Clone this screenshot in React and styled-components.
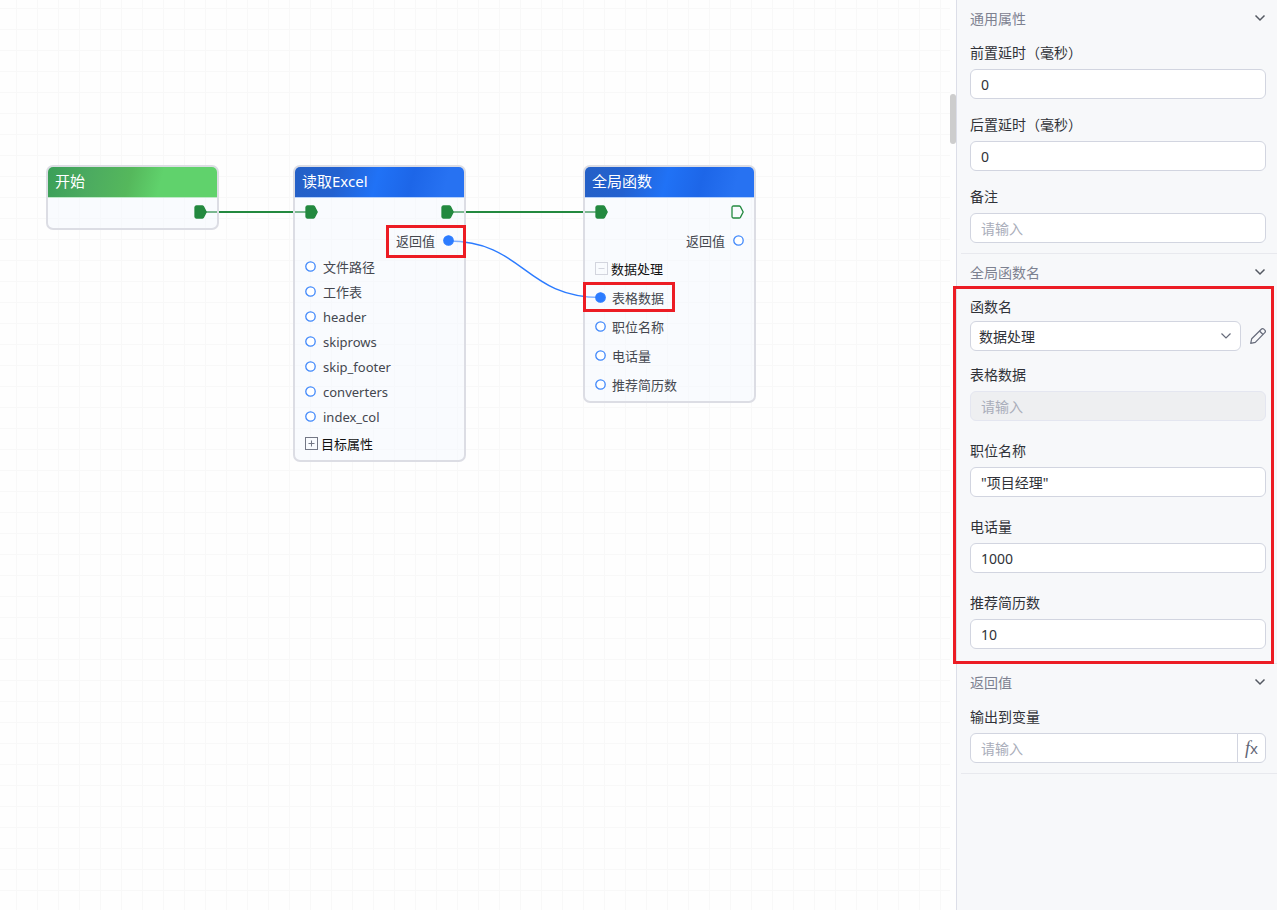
import React from "react";
import styled, { createGlobalStyle } from "styled-components";

const GlobalStyle = createGlobalStyle`
  * {
    box-sizing: border-box;
  }
  body {
    margin: 0;
    font-family: "Noto Sans", "Noto Sans CJK SC", sans-serif;
    font-size: 14px;
    color: #303238;
    background: #fefefe;
  }
  button,
  input,
  select {
    font: inherit;
    color: inherit;
  }
`;

const Page = styled.div`
  display: flex;
  min-height: 100vh;
`;

/* ---------- canvas ---------- */

const Canvas = styled.main`
  position: relative;
  flex: 1;
  overflow: hidden;
  background-color: #fefefe;
  background-image: linear-gradient(to right, #f8f8f8 1px, transparent 1px),
    linear-gradient(to bottom, #f8f8f8 1px, transparent 1px);
  background-size: 21px 21px;
  background-position: 16px 8px;
`;

const Wires = styled.svg`
  position: absolute;
  inset: 0;
  width: 100%;
  height: 100%;
  fill: none;
  stroke-width: 2;
`;

const Node = styled.section`
  position: absolute;
  left: ${(p) => p.$x}px;
  top: ${(p) => p.$y}px;
  width: 173px;
  border: 2px solid #dcdde4;
  border-radius: 7px;
  overflow: hidden;
  background: rgba(243, 247, 255, 0.42);
`;

const headerColors = {
  green:
    "linear-gradient(105deg, #3a9f58 0%, #4cab60 25%, #55b85c 48%, #60d26c 66%, #60d26c 100%)",
  blue: "linear-gradient(105deg, #2460c6 0%, #2361d0 25%, #2072f6 48%, #1d66e8 68%, #2772f2 88%, #2772f2 100%)",
};

const NodeTitle = styled.h2`
  margin: 0;
  height: 31px;
  padding: 0 7px;
  border-bottom: 1px solid ${(p) => (p.$color === "green" ? "#bfe9c8" : "#b5d0fb")};
  background: ${(p) => headerColors[p.$color]};
  background-clip: padding-box;
  color: #fff;
  font-size: 15px;
  font-weight: 400;
  line-height: 28px;
`;

const NodeBody = styled.div`
  padding: 0 10px 2px;
`;

const ExecRow = styled.div`
  display: flex;
  align-items: center;
  justify-content: ${(p) => (p.$start ? "space-between" : "flex-end")};
  height: 28px;
`;

const PortRow = styled.div`
  display: flex;
  align-items: center;
  justify-content: ${(p) => (p.$out ? "flex-end" : "flex-start")};
  gap: ${(p) => p.$gap || 8}px;
  height: ${(p) => p.$height || 28}px;
  font-size: 13px;
  color: #44474f;
`;

const GroupToggle = styled.button`
  display: flex;
  align-items: center;
  gap: 3px;
  height: 29px;
  padding: 0;
  border: 0;
  background: none;
  color: #111;
  font-size: 13px;
`;

const Highlight = styled.div`
  position: absolute;
  left: ${(p) => p.$x}px;
  top: ${(p) => p.$y}px;
  width: ${(p) => p.$w}px;
  height: ${(p) => p.$h}px;
  border: 3px solid #ec1c24;
  pointer-events: none;
`;

const ExecPin = ({ filled = true }) => (
  <svg width="13" height="14" viewBox="0 0 13 14">
    <path
      d="M2.5 1h5.7c.5 0 .9.2 1.2.6L12.2 7l-2.8 5.4c-.3.4-.7.6-1.2.6H2.5C1.600 13 1 12.400 1 11.500v-9C1 1.600 1.600 1 2.500 1z"
      fill={filled ? "#23893f" : "none"}
      stroke="#23893f"
      strokeWidth="1.300"
      strokeLinejoin="round"
    />
  </svg>
);

const DataPin = ({ filled = false }) => (
  <svg width="11" height="11" viewBox="0 0 11 11">
    <circle
      cx="5.5"
      cy="5.5"
      r="4.700"
      fill={filled ? "#2b7bff" : "#fff"}
      stroke={filled ? "#2b7bff" : "#4088fb"}
      strokeWidth="1.300"
    />
  </svg>
);

const FoldIcon = ({ open }) => (
  <svg width="13" height="13" viewBox="0 0 13 13" fill="none" stroke={open ? "#d3d5de" : "#737785"}>
    <rect x="0.5" y="0.5" width="12" height="12" />
    <path d={open ? "M3.500 6.500h6" : "M3.500 6.500h6M6.500 3.500v6"} />
  </svg>
);

/* ---------- properties panel ---------- */

const Gutter = styled.div`
  flex: none;
  width: 6px;
  padding-top: 94px;
`;

const Thumb = styled.div`
  height: 50px;
  border-radius: 3px;
  background: #cdcdcd;
`;

const Panel = styled.aside`
  flex: none;
  width: 321px;
  padding-left: 4px;
  border-left: 1px solid #dcdee8;
  background: #f7f8fa;
`;

const Section = styled.section`
  position: relative;
  padding: 0 11px ${(p) => (p.$roomy ? 14 : 10)}px 9px;
  border-bottom: 1px solid #e8e9ee;
`;

const SectionHeader = styled.button`
  display: flex;
  align-items: center;
  justify-content: space-between;
  width: 100%;
  height: 36px;
  margin-bottom: 7px;
  padding: 0;
  border: 0;
  background: none;
  color: #7d8190;
`;

const Fields = styled.div`
  display: flex;
  flex-direction: column;
  gap: ${(p) => p.$gap || 16}px;
`;

const Label = styled.label`
  display: block;
  height: 20px;
  margin-bottom: ${(p) => (p.$tight ? 4 : 6)}px;
  line-height: 20px;
`;

const Input = styled.input`
  display: block;
  width: 100%;
  height: 30px;
  padding: 0 10px;
  border: 1px solid #d2d5e0;
  border-radius: 6px;
  outline: none;
  background: #fff;
  &::placeholder {
    color: #a9adba;
    opacity: 1;
  }
  &:disabled {
    border-color: #e4e6f0;
    background: #eeeff1;
  }
`;

const FunctionField = styled.div`
  margin-bottom: -6px;
`;

const SelectRow = styled.div`
  display: flex;
  align-items: center;
  gap: 9px;
`;

const SelectBox = styled.div`
  position: relative;
  flex: 1;
  svg {
    position: absolute;
    right: 9px;
    top: 10px;
    pointer-events: none;
  }
`;

const Select = styled.select`
  display: block;
  width: 100%;
  height: 30px;
  padding: 0 8px;
  border: 1px solid #d2d5e0;
  border-radius: 6px;
  appearance: none;
  background: #fff;
`;

const IconButton = styled.button`
  display: flex;
  padding: 0;
  border: 0;
  background: none;
`;

const InputGroup = styled.div`
  display: flex;
  ${Input} {
    flex: 1;
    min-width: 0;
    border-radius: 6px 0 0 6px;
  }
`;

const FxButton = styled.button`
  width: 29px;
  height: 30px;
  margin-left: -1px;
  padding: 0;
  border: 1px solid #d2d5e0;
  border-radius: 0 6px 6px 0;
  background: #fff;
  color: #5f6575;
  font-size: 15px;
  line-height: 26px;
  i {
    font-family: "Liberation Serif", serif;
    font-size: 18px;
  }
`;

const Chevron = ({ width = 1.5, color = "#555962" }) => (
  <svg width="12" height="10" viewBox="0 0 12 10" fill="none" stroke={color} strokeWidth={width}>
    <path d="M1.500 2.500L6 7l4.500-4.500" />
  </svg>
);

const Pencil = () => (
  <svg width="16" height="16" viewBox="0 0 16 16" fill="none" stroke="#666b7a" strokeLinejoin="round">
    <path
      d="M.7 15.300l1-4.600L11.300 1.200c.7-.7 1.800-.7 2.500 0l1 1c.7.7.7 1.800 0 2.500L5.300 14.300z"
      strokeWidth="1.200"
    />
    <path d="M9.500 3l3.500 3.500" strokeWidth="1.200" />
  </svg>
);

const SectionTitle = ({ children }) => (
  <SectionHeader type="button">
    <span>{children}</span>
    <Chevron />
  </SectionHeader>
);

const TextField = ({ id, label, ...rest }) => (
  <div>
    <Label htmlFor={id}>{label}</Label>
    <Input id={id} type="text" {...rest} />
  </div>
);

const excelInputs = [
  "文件路径",
  "工作表",
  "header",
  "skiprows",
  "skip_footer",
  "converters",
  "index_col",
];

const functionInputs = ["表格数据", "职位名称", "电话量", "推荐简历数"];

const App = () => {
  return (
    <Page>
      <GlobalStyle />
      <Canvas>
        <Wires>
          <path d="M200 212H311M447 212H601" stroke="#23893f" />
          <path d="M448 241C524 241 524 297.500 601 297.500" stroke="#2b7bff" strokeWidth="1.400" />
        </Wires>

        <Node $x={46} $y={165}>
          <NodeTitle $color="green">开始</NodeTitle>
          <NodeBody>
            <ExecRow>
              <ExecPin />
            </ExecRow>
          </NodeBody>
        </Node>

        <Node $x={293} $y={165}>
          <NodeTitle $color="blue">读取Excel</NodeTitle>
          <NodeBody>
            <ExecRow $start>
              <ExecPin />
              <ExecPin />
            </ExecRow>
            <PortRow $out>
              返回值
              <DataPin filled />
            </PortRow>
            {excelInputs.map((name) => (
              <PortRow key={name} $height={25} $gap={7}>
                <DataPin />
                {name}
              </PortRow>
            ))}
            <GroupToggle type="button">
              <FoldIcon />
              目标属性
            </GroupToggle>
          </NodeBody>
        </Node>

        <Node $x={583} $y={165}>
          <NodeTitle $color="blue">全局函数</NodeTitle>
          <NodeBody>
            <ExecRow $start>
              <ExecPin />
              <ExecPin filled={false} />
            </ExecRow>
            <PortRow $out>
              返回值
              <DataPin />
            </PortRow>
            <GroupToggle type="button">
              <FoldIcon open />
              数据处理
            </GroupToggle>
            {functionInputs.map((name, i) => (
              <PortRow key={name} $height={29} $gap={6}>
                <DataPin filled={i === 0} />
                {name}
              </PortRow>
            ))}
          </NodeBody>
        </Node>

        <Highlight $x={386} $y={225} $w={80} $h={33} />
        <Highlight $x={583} $y={282} $w={92} $h={30} />
      </Canvas>

      <Gutter>
        <Thumb />
      </Gutter>

      <Panel>
        <Section>
          <SectionTitle>通用属性</SectionTitle>
          <Fields>
            <TextField id="delay-before" label="前置延时（毫秒）" defaultValue="0" />
            <TextField id="delay-after" label="后置延时（毫秒）" defaultValue="0" />
            <TextField id="remark" label="备注" placeholder="请输入" />
          </Fields>
        </Section>

        <Section $roomy>
          <SectionTitle>全局函数名</SectionTitle>
          <Fields $gap={20}>
            <FunctionField>
              <Label $tight htmlFor="function-name">
                函数名
              </Label>
              <SelectRow>
                <SelectBox>
                  <Select id="function-name" defaultValue="数据处理">
                    <option>数据处理</option>
                  </Select>
                  <Chevron width={1.2} color="#666b7a" />
                </SelectBox>
                <IconButton type="button" aria-label="编辑">
                  <Pencil />
                </IconButton>
              </SelectRow>
            </FunctionField>
            <TextField id="table-data" label="表格数据" placeholder="请输入" disabled />
            <TextField id="position" label="职位名称" defaultValue={'"项目经理"'} />
            <TextField id="calls" label="电话量" defaultValue="1000" />
            <TextField id="resumes" label="推荐简历数" defaultValue="10" />
          </Fields>
          <Highlight $x={-8} $y={32} $w={321} $h={378} />
        </Section>

        <Section>
          <SectionTitle>返回值</SectionTitle>
          <Label htmlFor="output">输出到变量</Label>
          <InputGroup>
            <Input id="output" type="text" placeholder="请输入" />
            <FxButton type="button">
              <i>f</i>x
            </FxButton>
          </InputGroup>
        </Section>
      </Panel>
    </Page>
  );
};

export default App;
